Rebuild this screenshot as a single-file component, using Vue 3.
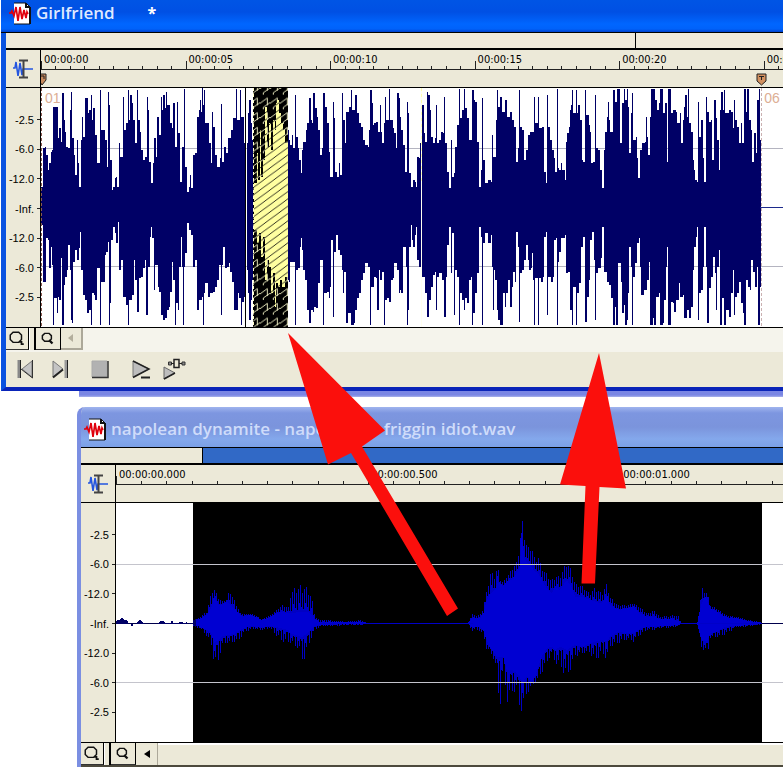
<script setup>
const levels = ['-2.5', '-6.0', '-12.0', '-Inf.', '-12.0', '-6.0', '-2.5']
const songTimes = ['00:00:00', '00:00:05', '00:00:10', '00:00:15', '00:00:20', '00:00:25']
const clipTimes = ['00:00:00.000', '00:00:00.500', '00:00:01.000']

/* Each song block lists "x level" steps for the upper and lower edge of the wave. */
const song = [
  {
    x: 0, end: 737,
    top: '124 320 130 205 134 200 138 225 144 270 148 250 152 215 156 210 160 80 173 175 178 145 182 185 187 40 191 120 194 155 198 200 203 205 210 90 213 35 217 175 222 225 226 285 231 180 234 250 238 320 243 180 246 110 250 170 255 55 263 100 268 90 272 45 275 120 279 85 286 165 290 250 300 30 304 150 314 180 320 260 324 35 328 75 331 240 335 330 340 320 344 295 348 290 352 320 357 190 361 232 368 50 371 150 378 130 383 30 386 120 390 45 396 70 400 120 406 190 410 30 415 120 419 155 424 210 428 240 434 230 440 50 444 90 448 245 452 310 458 250 462 175 468 230 472 110 476 165 482 50 486 90 490 45 494 85 497 35 500 75 510 130 515 145 520 70 525 200 530 65 534 160 540 305 546 200 551 28 554 260 560 335 566 320 570 285 574 325 580 225 584 220 592 110 596 90 599 60 603 95 606 25 609 75 612 30 616 130 626 190 632 250 636 95 639 140 645 225 650 262 660 235 663 72 667 245 672 200 677 220 683 175 694 150 700 115 708 28 711 120 720 30 723 110 733 190',
    bottom: '124 435 130 605 138 475 144 480 148 565 152 500 157 555 160 735 163 655 170 700 173 650 178 660 182 535 187 735 191 615 194 590 200 570 204 495 210 570 213 720 217 730 219 545 226 510 231 540 236 505 240 455 243 570 249 645 255 660 262 700 266 690 272 735 275 640 282 645 286 660 290 565 300 735 304 605 314 525 318 515 323 485 327 735 331 670 334 480 338 440 344 460 348 490 354 425 358 570 364 540 370 650 378 675 383 735 388 660 396 645 401 540 406 600 411 695 416 595 424 590 428 565 434 540 439 705 444 560 450 470 453 440 457 475 461 630 465 555 474 620 478 635 482 705 490 720 494 715 500 690 506 680 510 635 516 545 520 600 525 735 528 670 533 690 538 560 542 470 546 560 550 735 553 560 556 520 560 430 567 450 573 465 580 560 586 540 592 690 596 660 606 650 609 735 611 640 616 610 624 650 630 640 640 635 646 620 652 600 658 555 664 705 667 555 670 500 675 565 681 560 686 550 690 575 696 605 703 690 713 640 718 655 723 735 727 665 733 650',
  },
  {
    x: 720, end: 40,
    top: '22 190 25 100 28 60 32 130 36 180',
    bottom: '22 570 25 640 28 720 32 660 36 600',
  },
  {
    x: 720, end: 810,
    top: '143 150 147 180 151 195 155 165 160 205 165 45 168 170 173 205 178 240 182 280 186 210 190 185 198 150 202 130 208 55 212 120 216 130 220 40 224 85 232 110 234 150 240 225 246 205 250 40 254 80 260 130 266 215 270 290 278 65 282 115 286 275 290 290 296 250 300 285 305 195 307 40 310 120 316 190 319 95 326 80 334 30 337 90 346 45 350 100 358 130 362 50 364 140 370 180 376 195 384 200 388 150 391 30 395 70 398 135 402 130 408 125 413 155 419 75 422 155 426 190 431 130 434 50 437 120 446 28 449 120 458 145 463 160 468 205 472 40 476 55 479 110 484 150 490 195 496 275 500 65 504 100 508 280 512 320 518 300 524 305 528 320 532 230 538 235 540 190 544 75 552 160 556 185 560 35 564 45 570 90 574 170 580 190 584 175 588 75 591 190 596 180 604 155 609 160 613 50 616 190 620 275 628 325 632 180 636 290 641 170 643 280 646 200 652 135 656 28 659 115 666 90 672 28 676 85 682 115 686 180 697 30 701 60 706 65 710 185 716 320 722 270 725 55 728 240 734 280 736 310 744 300 752 305 757 165 760 230 768 120 771 30 775 80 781 50 786 95 794 85 796 60 801 110',
    bottom: '143 600 148 605 151 545 158 545 165 735 168 570 175 565 180 500 182 475 186 510 190 570 196 600 201 690 206 730 214 690 220 695 223 680 229 685 235 610 240 540 250 735 253 640 260 635 266 655 270 620 272 480 278 710 282 515 288 465 294 510 300 525 305 570 308 640 313 575 319 730 324 700 332 735 342 730 346 690 352 655 358 640 362 685 364 600 370 580 376 550 384 560 391 735 394 620 402 590 408 595 412 690 416 570 420 600 426 575 433 735 436 660 442 655 446 730 448 665 454 600 458 595 463 550 472 570 476 640 480 630 484 640 490 500 497 560 500 735 504 690 508 500 512 435 516 480 520 500 524 465 528 440 532 540 538 560 544 590 555 640 560 710 566 660 572 620 578 585 584 575 588 690 592 590 598 580 606 600 613 710 617 590 620 495 628 440 632 580 636 460 641 705 645 570 652 590 656 735 660 640 666 660 672 690 676 655 682 670 688 600 692 590 697 735 700 700 706 640 712 580 716 440 722 470 725 735 729 490 736 460 744 490 752 465 755 560 758 690 762 570 766 600 771 690 774 720 781 735 788 640 794 680 798 640 803 600',
  },
  {
    x: 1530, end: 752,
    top: '0 95 6 120 12 140 18 245 24 205 28 30 31 140 36 150 42 240 48 210 54 165 60 155 72 50 75 130 84 50 87 145 95 140 103 275 108 310 112 45 115 140 120 180 126 210 132 235 136 275 141 28 144 265 148 270 152 250 156 270 164 300 168 185 172 160 176 140 180 90 184 75 187 30 190 100 197 30 200 100 204 75 209 120 215 240 220 245 226 30 229 105 236 135 241 155 244 250 248 245 254 45 257 205 264 210 271 270 277 325 281 210 286 155 292 110 295 65 298 120 300 155 309 30 314 65 320 28 329 190 336 70 341 28 346 60 350 28 355 80 358 220 362 100 367 40 370 180 378 170 380 235 384 295 390 210 396 190 404 185 408 110 411 170 415 225 419 110 424 28 434 60 440 90 446 70 449 28 458 100 464 70 470 245 474 28 482 100 490 90 498 95 502 130 509 100 514 190 518 120 522 80 526 45 530 110 535 28 538 130 544 155 548 240 552 270 556 300 561 305 564 65 567 170 574 120 578 235 582 305 588 50 592 95 596 125 602 120 607 240 613 60 617 115 620 180 627 270 631 90 634 35 638 90 643 30 646 100 656 90 662 95 668 145 672 60 675 120 682 140 688 190 692 130 697 190 702 28 708 95 712 28 716 120 722 150 727 245 732 160 738 220 742 60 746 28 749 180',
    bottom: '0 680 6 620 10 575 16 605 19 455 24 500 28 725 31 580 36 570 42 540 48 495 54 540 58 570 62 565 65 520 68 600 72 735 75 595 84 735 87 595 92 605 98 590 103 470 108 455 112 705 115 590 122 605 128 590 132 480 138 475 142 735 144 545 148 515 154 475 164 465 168 580 174 575 180 690 185 735 190 620 197 735 201 640 206 610 212 500 218 470 224 460 226 725 230 650 236 600 240 480 246 455 251 540 254 720 257 580 264 565 272 535 277 440 282 575 290 605 296 615 302 655 308 735 315 680 318 735 325 550 332 605 337 700 341 675 345 735 350 720 355 640 358 500 362 560 366 735 370 590 375 550 380 490 386 475 390 560 394 645 402 630 410 600 416 545 420 735 428 715 432 735 438 650 446 640 450 735 459 730 462 660 467 560 470 500 474 735 482 665 488 670 492 695 498 660 506 610 511 650 518 645 522 715 530 690 537 715 543 680 548 570 552 500 557 470 562 440 565 720 568 640 574 630 580 560 583 440 588 560 592 730 596 625 602 590 608 530 614 580 618 690 622 560 627 510 631 735 636 655 642 735 649 690 656 710 662 640 668 570 673 705 676 650 682 640 688 605 692 670 698 700 703 735 708 600 714 620 720 630 724 540 729 575 734 620 740 560 745 735 749 620',
  },
]

const picked = {
  x: 720, end: 143,
  top: '42 310 50 220 54 300 60 150 64 290 70 240 76 80 82 200 88 130 94 210 98 120 104 150 108 70 112 60 118 100 124 130 130 150 136 190',
  bottom: '42 450 50 490 56 460 62 530 68 470 76 600 82 540 88 560 92 640 98 580 104 680 108 610 114 620 120 600 126 620 134 590',
}

function edge(text, x, end) {
  const n = text.split(' ').map(Number)
  const points = []
  for (let i = 0; i < n.length; i += 2) {
    const next = i + 2 < n.length ? n[i + 2] : end
    points.push([n[i] + x, n[i + 1]], [next + x, n[i + 1]])
  }
  return points
}

function stepPath({ x, end, top, bottom }) {
  return 'M' + [...edge(top, x, end), ...edge(bottom, x, end).reverse()].map((p) => p.join(' ')).join('L') + 'Z'
}

const songPath = song.map(stepPath).join('')
const pickedPath = stepPath(picked)

/* Clip knots: x, solid top, peak top, solid bottom, peak bottom. */
const knots = [
  [210, [[370, 392, 390, 405, 410], [390, 388, 380, 410, 415], [410, 375, 365, 420, 440], [425, 350, 300, 430, 470], [432, 320, 295, 460, 520], [445, 345, 320, 450, 515], [455, 345, 335, 440, 470], [470, 335, 330, 435, 460], [478, 340, 295, 435, 460], [495, 360, 335, 430, 455], [510, 375, 368, 420, 450], [520, 380, 372, 415, 430], [540, 375, 370, 408, 420], [560, 382, 378, 410, 418], [575, 390, 388, 412, 420], [600, 382, 375, 408, 415], [620, 370, 360, 412, 440], [635, 365, 345, 415, 455], [655, 370, 350, 420, 460], [662, 370, 300, 430, 460], [690, 365, 285, 440, 480], [698, 365, 290, 440, 520], [712, 365, 290, 430, 480], [725, 375, 320, 415, 440], [735, 388, 378, 408, 420], [748, 396, 390, 404, 412]]],
  [960, [[0, 396, 388, 405, 410], [40, 396, 392, 403, 408], [80, 397, 395, 403, 405], [120, 396, 390, 403, 406], [140, 398, 398, 402, 402], [445, 398, 398, 402, 402], [455, 385, 370, 410, 425], [465, 385, 375, 410, 420], [480, 385, 375, 410, 425], [490, 370, 350, 420, 435], [500, 330, 300, 450, 480], [512, 310, 240, 475, 490], [525, 300, 260, 490, 520], [532, 280, 220, 500, 600], [540, 280, 270, 500, 655], [550, 290, 275, 500, 520], [560, 275, 260, 540, 640], [575, 270, 235, 540, 610], [590, 250, 215, 550, 600], [600, 230, 150, 560, 670], [605, 130, 80, 580, 660], [612, 200, 130, 570, 640], [622, 220, 170, 560, 610], [635, 230, 170, 575, 590], [645, 245, 210, 560, 580], [655, 250, 200, 530, 570], [665, 270, 230, 500, 550], [680, 295, 250, 475, 520], [695, 310, 270, 470, 490], [705, 290, 260, 480, 520]]],
  [1620, [[60, 300, 255, 470, 530], [80, 270, 215, 480, 565], [95, 290, 240, 470, 530], [105, 320, 280, 465, 500], [125, 320, 285, 470, 490], [150, 330, 310, 460, 490], [165, 335, 290, 455, 515], [185, 340, 310, 450, 490], [200, 320, 280, 455, 510], [210, 345, 320, 440, 470], [235, 360, 345, 425, 460], [260, 355, 345, 430, 450], [280, 350, 340, 430, 455], [300, 370, 350, 415, 435], [320, 380, 370, 410, 420], [340, 380, 360, 410, 420], [360, 388, 380, 408, 415], [400, 388, 375, 406, 412], [418, 395, 380, 404, 408], [422, 398, 398, 402, 402], [472, 398, 398, 402, 402], [476, 375, 370, 420, 425], [485, 340, 290, 450, 480], [495, 320, 305, 455, 480], [503, 330, 310, 450, 495], [510, 355, 345, 430, 445], [530, 365, 355, 425, 440], [545, 375, 365, 415, 440], [560, 383, 375, 410, 430], [590, 385, 380, 408, 412], [620, 393, 388, 405, 410], [665, 398, 397, 402, 403]]],
].flatMap(([x, list]) => list.map(([kx, ...rest]) => [kx + x, ...rest]))

function clipColumns() {
  const inner = []
  let d = ''
  let i = 0
  for (let x = knots[0][0]; x < knots[knots.length - 1][0]; x += 3) {
    while (x > knots[i + 1][0]) i++
    const [a, b] = [knots[i], knots[i + 1]]
    const t = (x - a[0]) / (b[0] - a[0])
    const at = (k) => a[k] + (b[k] - a[k]) * t
    const column = Math.round(x / 3)
    const up = [1, 0.2, 0.75, 0.1, 0.9, 0.35][column % 6]
    const down = [0.2, 0.9, 0.1, 1, 0.4, 0.7, 0.15][column % 7]
    inner.push([x, at(1), at(3)])
    const top = Math.round(at(1) + (at(2) - at(1)) * up)
    const bottom = Math.round(at(3) + (at(4) - at(3)) * down)
    d += `M${x} ${top}h3V${bottom}h-3Z`
  }
  const core =
    'M' + inner.map((p) => `${p[0]} ${Math.round(p[1])}`).join('L') +
    'L' + inner.reverse().map((p) => `${p[0]} ${Math.round(p[2])}`).join('L') + 'Z'
  return { d, core }
}
const clip = clipColumns()
</script>

<template>
  <main class="desktop">
    <svg class="defs" aria-hidden="true">
      <symbol id="file" viewBox="0 0 22 23">
        <path d="M5 1h12l4 4v17H5z" fill="#fff" />
        <path d="M5 1h12l4 4v17H5" fill="none" stroke="#111" />
        <path d="M17 1v4h4M21 5v17" fill="none" stroke="#111" stroke-width="2" />
        <path d="M0 11h2l1-2 2 5 2-9 2 14 2-14 2 12 2-9 2 8 1-6 1 2" fill="none" stroke="#e0000c" stroke-width="1.700" />
      </symbol>
      <symbol id="edit" viewBox="0 0 20 20">
        <path d="M0 9h2l1-6 2 14 2-13 2 12 1-6h10" fill="none" stroke="#2355e0" stroke-width="1.600" />
        <path d="M6 1.500h9M6 18.500h9M10.500 2v16" fill="none" stroke="#444" stroke-width="2" />
      </symbol>
      <symbol id="lens" viewBox="0 0 16 16">
        <path d="M4.500 2h5L12 4.500v4L9.500 11h-5L2 8.500v-4z" fill="none" stroke="#111" stroke-width="1.300" />
        <path d="M10 10.500h2v2h2" fill="none" stroke="#111" stroke-width="1.500" />
      </symbol>
      <symbol id="lens-small" viewBox="0 0 16 16">
        <path d="M5 3h4l2 2v3L9 10H5L3 8V5z" fill="none" stroke="#111" stroke-width="1.300" />
        <path d="M9 9l3 3" fill="none" stroke="#111" stroke-width="2" />
      </symbol>
    </svg>

    <section class="window active">
      <header class="title">
        <svg class="file"><use href="#file" /></svg>
        <h1>Girlfriend</h1>
        <span class="star">*</span>
      </header>
      <div class="overview"><span class="seen"></span></div>
      <div class="body">
        <div class="corner"><svg class="edit"><use href="#edit" /></svg></div>
        <div class="ruler">
          <div class="times">
            <div v-for="t in songTimes" :key="t" class="major">
              <span class="time">{{ t }}</span>
              <i v-for="n in 10" :key="n"></i>
            </div>
          </div>
          <div class="marks">
            <svg class="mark first" viewBox="0 0 11 13"><path d="M-6 1H5v6L1 12z" fill="#c98a5c" stroke="#222" /><path d="M0 3h3M3 3v3" stroke="#222" /></svg>
            <svg class="mark last" viewBox="0 0 11 13"><path d="M1 1h9v7l-4.500 4L1 8z" fill="#d2905f" stroke="#222" /><path d="M3 3.500h5M5.500 3v4" stroke="#222" /></svg>
          </div>
        </div>
        <div class="scale"><span v-for="(l, i) in levels" :key="i">{{ l }}</span></div>
        <div class="wave">
          <svg viewBox="123 24 2226 717" preserveAspectRatio="none" shape-rendering="crispEdges">
            <defs>
              <pattern id="light" width="30" height="22" patternUnits="userSpaceOnUse" shape-rendering="auto">
                <rect width="30" height="22" fill="#ffffa0" />
                <path d="M-30 44L60 -22M-30 22L30 -22M0 44L60 0" stroke="#000" stroke-width="2.400" />
              </pattern>
              <pattern id="dark" width="30" height="44" patternUnits="userSpaceOnUse" shape-rendering="auto">
                <rect width="30" height="44" fill="#000" />
                <path d="M0 26L22 10V32M10 44V38L30 24" fill="none" stroke="#ffffd0" stroke-width="2.600" />
              </pattern>
            </defs>
            <path d="M123 205.500H2349M123 559.500H2349" stroke="#b4b4c0" stroke-width="3" />
            <path :d="songPath" fill="#000066" />
            <path d="M2280 382H2349" stroke="#1c2a8c" stroke-width="3" />
            <path d="M737 24V741" stroke="#000" stroke-width="3" />
            <path d="M1265 24V741" stroke="#fffff0" stroke-width="4" />
            <path d="M1265 24V310" stroke="#ffffb0" stroke-width="3" stroke-dasharray="9 9" />
            <rect x="759" y="24" width="105" height="717" fill="url(#dark)" />
            <path :d="pickedPath" fill="url(#light)" />
            <path d="M760 24V741" stroke="#ffffc8" stroke-width="3" stroke-dasharray="9 9" />
            <path d="M124 24V741" stroke="#8a5a50" stroke-width="3" stroke-dasharray="9 6" />
            <path d="M2283 24V741" stroke="#c9b0b0" stroke-width="3" stroke-dasharray="9 6" />
          </svg>
          <b class="region start">01</b>
          <b class="region finish">06</b>
        </div>
      </div>
      <div class="scroll">
        <button class="tool" aria-label="Zoom in"><svg class="lens"><use href="#lens" /></svg></button>
        <span class="grip"></span>
        <button class="tool wide" aria-label="Zoom out"><svg class="lens"><use href="#lens-small" /></svg></button>
        <button class="tool soft" aria-label="Scroll left"><svg viewBox="0 0 6 8" class="left"><path d="M5 0v8L0 4z" fill="#b3ae9c" /></svg></button>
      </div>
      <div class="transport">
        <button aria-label="Go to start">
          <svg viewBox="0 0 18 20"><path d="M15 2v16L5 10z" fill="#c4c4c4" stroke="#777" /><path d="M15.500 1v18L4 10" fill="none" stroke="#333" /><path d="M2 1v18" stroke="#888" stroke-width="3" /><path d="M3.500 1v18" stroke="#222" /></svg>
        </button>
        <button aria-label="Go to end">
          <svg viewBox="0 0 18 20"><path d="M2 2v16l10-8z" fill="#c4c4c4" stroke="#777" /><path d="M2 18.500l10-8" stroke="#222" stroke-width="2" /><path d="M15 1v18" stroke="#999" stroke-width="3" /><path d="M16.500 1v18" stroke="#222" /></svg>
        </button>
        <button aria-label="Stop">
          <svg viewBox="0 0 18 20"><path d="M1 2h15v16H1z" fill="#b2b2b2" stroke="#aaa" /><path d="M1 18.500h16V2" fill="none" stroke="#333" stroke-width="1.500" /></svg>
        </button>
        <button aria-label="Play">
          <svg viewBox="0 0 20 20"><path d="M2 2v16l16-8z" fill="#bdbdbd" stroke="#777" /><path d="M2 2l16 8L2 18.500" fill="none" stroke="#222" stroke-width="1.500" /><path d="M10 18.500h9" stroke="#222" stroke-width="2" /></svg>
        </button>
        <button aria-label="Play plug-in">
          <svg viewBox="0 0 24 22"><path d="M1 9v12l11-6z" fill="#bdbdbd" stroke="#666" /><path d="M1 21l11-6" stroke="#222" stroke-width="1.500" /><path d="M11 1.500h5v8h-5z" fill="#ece9d8" stroke="#222" stroke-width="1.500" /><path d="M5.500 4h3v3h-3zM19 4h3v3h-3z" fill="#888" stroke="#333" /><path d="M8 5.500h3M16 5.500h3" stroke="#222" /></svg>
        </button>
      </div>
    </section>

    <div class="behind"></div>

    <section class="window idle">
      <header class="title">
        <svg class="file"><use href="#file" /></svg>
        <h1>napolean dynamite - napoleans - friggin idiot.wav</h1>
      </header>
      <div class="overview"><span class="seen"></span></div>
      <div class="body">
        <div class="corner"><svg class="edit"><use href="#edit" /></svg></div>
        <div class="ruler">
          <div class="times">
            <div v-for="t in clipTimes" :key="t" class="major">
              <span class="time">{{ t }}</span>
              <i v-for="n in 10" :key="n"></i>
            </div>
          </div>
        </div>
        <div class="scale"><span v-for="(l, i) in levels" :key="i">{{ l }}</span></div>
        <div class="wave">
          <svg viewBox="348 39 2001 717" preserveAspectRatio="none" shape-rendering="crispEdges">
            <rect x="579" y="39" width="1707" height="717" fill="#000" />
            <path :d="clip.d" fill="#0000c4" />
            <path :d="clip.core" fill="#0000d2" />
            <path d="M960 400.500H1420M2036 400.500H2286" stroke="#0000c8" stroke-width="3" />
            <path d="M348 223.500H2349M348 577.500H2349" stroke="#c4c4cc" stroke-width="3" />
            <path d="M348 400.500H579M2286 400.500H2349" stroke="#00004c" stroke-width="3" />
            <path d="M348 401v-9l12-3 6-6 6 6 12 3v9h10v6h4v-6h14v-5l8-6 8 6 6 5h40l6-7 10-2 8 7h16v-6h6v6h14l12-5 4 5 10-2 4 8 4-6h10v-6l10-6v24l-10-8z" fill="#000066" />
          </svg>
        </div>
      </div>
      <div class="scroll">
        <button class="tool" aria-label="Zoom in"><svg class="lens"><use href="#lens" /></svg></button>
        <span class="grip"></span>
        <button class="tool wide" aria-label="Zoom out"><svg class="lens"><use href="#lens-small" /></svg></button>
        <button class="tool soft" aria-label="Scroll left"><svg viewBox="0 0 6 8" class="left"><path d="M6 0v8L0 4z" fill="#000" /></svg></button>
      </div>
    </section>

    <svg class="arrows" viewBox="0 0 783 767" aria-hidden="true">
      <path d="M288 333L385 430.500 362 446.500 458 608.500 447 616 351 453 328 464.500z" />
      <path d="M599 353L626 488.500 599.500 487 595 583.500H581.500L585.500 486 560 484.500z" />
    </svg>
  </main>
</template>

<style>
body {
  background: #fff;
}
</style>

<style scoped>
.desktop {
  position: relative;
  height: 100vh;
  overflow: hidden;
  font: 11px/14px "DejaVu Sans Condensed", "Liberation Sans", sans-serif;
  color: #000;
}
.defs {
  position: absolute;
  width: 0;
  height: 0;
}
.window {
  box-sizing: border-box;
  background: #ece9d8;
}
.active {
  margin-left: 1px;
  border-left: 5px solid #0a52e0;
  border-bottom: 4px solid #0a24b8;
}
.idle {
  margin-top: 10px;
  margin-left: 77px;
  border-left: 4px solid #7b8fe2;
  border-top-left-radius: 8px;
  overflow: hidden;
}
.behind {
  height: 6px;
  margin-left: 79px;
  background: linear-gradient(#7a86e4 4px, #a9b2ea);
}
.title {
  display: flex;
  align-items: center;
  gap: 5px;
  border-bottom: 1px solid #000;
}
.active .title {
  box-sizing: border-box;
  height: 33px;
  margin-left: -5px;
  padding: 0 0 6px 8px;
  background: linear-gradient(#0055e5 0, #0050e4 12px, #0066ff 24px, #0062fa 29px, #0040cc 32px);
}
.idle .title {
  height: 40px;
  padding-left: 3px;
  background: linear-gradient(#a0b4ee 0, #7d96e0 6px, #7b94dc 20px, #84a8ec 32px, #7ba0e6 40px);
}
.title h1 {
  margin: 0;
  font: 600 17px/22px "Open Sans", "Noto Sans", sans-serif;
  white-space: nowrap;
}
.active h1 {
  color: #dfe9ff;
}
.idle h1 {
  padding-top: 4px;
  color: #cfdcfa;
}
.idle .file {
  margin-top: 4px;
}
.star {
  margin-left: 28px;
  font: 700 16px/22px "Open Sans", sans-serif;
  color: #fff;
}
.file {
  width: 22px;
  height: 23px;
}
.overview {
  display: flex;
  height: 15px;
  border-bottom: 2px solid #000;
}
.active .overview {
  background: #efe9da;
}
.active .seen {
  width: 81%;
  border-right: 1px solid #000;
}
.idle .overview {
  background: #3169c6;
}
.idle .seen {
  width: 17.3%;
  border-right: 1px solid #000;
  background: #ece9d8;
}
.body {
  display: grid;
  grid-template-columns: 35px 1fr;
  grid-template-rows: 38px 240px;
}
.corner,
.ruler {
  border-bottom: 1px solid #000;
}
.corner {
  display: grid;
  place-items: center;
  border-right: 1px solid #000;
}
.edit {
  width: 20px;
  height: 20px;
}
.ruler {
  min-width: 0;
  overflow: hidden;
}
.times {
  display: flex;
  height: 19px;
  border-bottom: 1px solid #222;
}
.major {
  flex: 0 0 19.48%;
  display: grid;
  grid-template-columns: repeat(10, 1fr);
  grid-template-rows: 16px 3px;
  box-sizing: border-box;
  background: linear-gradient(#222, #222) left bottom / 1px 8px no-repeat;
}
.idle .major {
  flex-basis: 37.8%;
}
.time {
  grid-column: 1 / -1;
  padding-left: 3px;
  padding-top: 3px;
  line-height: 13px;
}
.major i {
  border-left: 1px solid #222;
}
.marks {
  position: relative;
  height: 17px;
}
.mark {
  position: absolute;
  top: 3px;
  width: 11px;
  height: 13px;
}
.first {
  left: 0;
}
.last {
  left: 97%;
  margin-left: -5px;
}
.scale {
  display: flex;
  flex-direction: column;
  padding: 17px 0 15px;
  border-right: 1px solid #000;
  border-bottom: 1px solid #000;
  font-family: "Liberation Sans", sans-serif;
}
.scale span {
  flex: 1;
  display: flex;
  align-items: center;
  justify-content: flex-end;
  gap: 3px;
}
.scale span::after {
  content: "";
  width: 3px;
  height: 1px;
  background: #222;
}
.wave {
  position: relative;
  min-width: 0;
  background: #fff;
  border-bottom: 1px solid #000;
}
.wave svg {
  display: block;
  width: 100%;
  height: 239px;
}
.region {
  position: absolute;
  top: 3px;
  font: 14px/14px "Liberation Sans", sans-serif;
  color: #dcae94;
}
.start {
  left: 4px;
}
.finish {
  left: 98%;
  margin-left: -4px;
}
.scroll {
  display: flex;
  height: 24px;
}
.active .scroll {
  background: #f5f4ec;
}
.idle .scroll {
  height: 22px;
  border-bottom: 3px solid #4c493c;
  box-shadow: inset 0 2px #fff;
}
button {
  display: grid;
  place-items: center;
  margin: 0;
  padding: 0;
  border: 0;
  background: none;
}
.tool {
  width: 23px;
  height: 22px;
  box-sizing: border-box;
  background: #ece9d8;
  border-right: 1px solid #000;
  border-bottom: 1px solid #333;
}
.grip {
  width: 7px;
  height: 22px;
  box-sizing: border-box;
  background: #ece9d8;
  border-left: 1px solid #fff;
  border-right: 2px solid #000;
}
.wide {
  width: 25px;
}
.soft {
  width: 22px;
  border-right: 2px solid #aca899;
  border-bottom: 2px solid #aca899;
}
.idle .soft {
  border-bottom: 0;
  border-right-width: 1px;
}
.lens {
  width: 18px;
  height: 18px;
}
.left {
  width: 6px;
  height: 8px;
}
.transport {
  display: flex;
  align-items: center;
  height: 33px;
  padding: 0 0 2px 10px;
  gap: 14px;
}
.transport button {
  width: 20px;
  height: 22px;
}
.transport svg {
  width: 18px;
  height: 20px;
}
.transport button:nth-child(3) {
  margin-left: 6px;
}
.transport button:nth-child(4) {
  margin-left: 7px;
}
.transport button:nth-child(4) svg {
  width: 20px;
}
.transport button:nth-child(5) {
  margin-left: -2px;
}
.transport button:nth-child(5) svg {
  width: 24px;
  height: 22px;
}
.arrows {
  position: absolute;
  top: 0;
  left: 0;
  width: 783px;
  height: 767px;
  fill: #fb0f0c;
  pointer-events: none;
}
</style>
